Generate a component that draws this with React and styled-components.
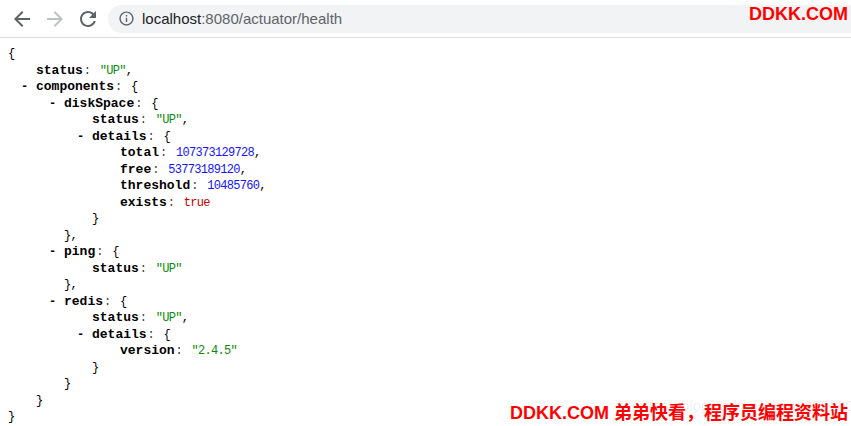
import React from 'react';
import styled, { createGlobalStyle } from 'styled-components';

const GlobalStyle = createGlobalStyle`
  html, body {
    margin: 0;
    padding: 0;
    background: #fff;
    overflow: hidden;
  }
`;

const Page = styled.div`
  position: relative;
  width: 851px;
  height: 426px;
  overflow: hidden;
  background: #fff;
`;

const Toolbar = styled.header`
  display: flex;
  align-items: center;
  height: 37px;
  padding-left: 10px;
  border-bottom: 1px solid #dadce0;
  overflow: hidden;
  box-sizing: content-box;
`;

const NavButton = styled.span`
  display: flex;
  width: 24px;
  height: 24px;
  margin-right: 9px;
  color: ${(p) => (p.disabled ? '#bdc1c6' : '#5f6368')};
`;

const Omnibox = styled.div`
  flex: 1;
  display: flex;
  align-items: center;
  gap: 7px;
  height: 28px;
  margin-left: -1px;
  margin-right: -20px;
  padding-left: 10px;
  border-radius: 14px;
  background: #f1f3f4;
  color: #5f6368;
`;

const Url = styled.span`
  font-family: 'Liberation Sans', Arial, sans-serif;
  font-size: 15px;
  color: #5f6368;
  b {
    font-weight: normal;
    color: #202124;
  }
`;

const Viewer = styled.main`
  padding: 8px 0 0 8px;
`;

const Line = styled.div`
  position: relative;
  height: 16.5px;
  line-height: 16.5px;
  padding-left: ${(p) => p.depth * 28}px;
  white-space: pre;
  font-family: 'Liberation Mono', 'Courier New', monospace;
  font-size: 12px;
  letter-spacing: -0.7px;
  color: #000;
`;

const Toggle = styled.span`
  display: inline-block;
  width: 16px;
  margin-left: -16px;
  padding-left: 1px;
  box-sizing: border-box;
  font-weight: bold;
  letter-spacing: 0;
`;

const Key = styled.span`
  font-size: 13px;
  font-weight: bold;
  letter-spacing: 0;
  color: #000;
`;

const Colon = styled.span`
  display: inline-block;
  width: 17px;
  padding-left: 1px;
  box-sizing: border-box;
  color: #444;
`;

const Value = styled.span`
  color: ${(p) => p.color};
`;

const Watermark = styled.div`
  position: absolute;
  right: ${(p) => p.right}px;
  ${(p) => (p.top !== undefined ? `top: ${p.top}px;` : `bottom: ${p.bottom}px;`)}
  font-family: 'Liberation Sans', 'Noto Sans CJK SC', sans-serif;
  font-weight: bold;
  font-size: ${(p) => p.size}px;
  color: #ff0000;
  white-space: nowrap;
`;

const Ghost = styled.div`
  position: absolute;
  left: 636px;
  bottom: 12px;
  font-family: 'Liberation Sans', Arial, sans-serif;
  font-size: 15px;
  color: rgba(0, 0, 0, 0.08);
  white-space: nowrap;
`;

const Icon = ({ d, size = 24, view = 24 }) => (
  <svg width={size} height={size} viewBox={`0 0 ${view} ${view}`} fill="currentColor">
    <path d={d} />
  </svg>
);

const BACK = 'M20 11H7.83l5.59-5.59L12 4l-8 8 8 8 1.41-1.41L7.83 13H20v-2z';
const FORWARD = 'M12 4l-1.41 1.41L16.17 11H4v2h12.17l-5.58 5.59L12 20l8-8z';
const RELOAD =
  'M17.65 6.35C16.2 4.9 14.21 4 12 4c-4.42 0-7.99 3.58-7.99 8s3.57 8 7.99 8c3.73 0 6.84-2.550 7.73-6h-2.08c-.82 2.33-3.04 4-5.65 4-3.31 0-6-2.69-6-6s2.69-6 6-6c1.66 0 3.14.69 4.22 1.78L13 11h7V4l-2.35 2.35z';
const INFO =
  'M11 7h2v2h-2zm0 4h2v6h-2zm1-9C6.48 2 2 6.48 2 12s4.48 10 10 10 10-4.48 10-10S17.52 2 12 2zm0 18c-4.41 0-8-3.59-8-8s3.59-8 8-8 8 3.59 8 8-3.59 8-8 8z';

const health = {
  status: 'UP',
  components: {
    diskSpace: {
      status: 'UP',
      details: {
        total: 107373129728,
        free: 53773189120,
        threshold: 10485760,
        exists: true,
      },
    },
    ping: { status: 'UP' },
    redis: {
      status: 'UP',
      details: { version: '2.4.5' },
    },
  },
};

const colorOf = (v) => {
  if (typeof v === 'string') return '#0a8a0a';
  if (typeof v === 'number') return '#1414ff';
  return '#c80000';
};

const show = (v) => (typeof v === 'string' ? `"${v}"` : String(v));

// flattens the json into printable lines
const buildLines = (value, depth, name, last, out) => {
  const comma = last ? '' : ',';
  const id = `${depth}-${name}-${out.length}`;
  if (value !== null && typeof value === 'object') {
    const entries = Object.entries(value);
    out.push(
      <Line key={id} depth={depth}>
        {name && <Toggle>-</Toggle>}
        {name && <Key>{name}</Key>}
        {name && <Colon>:</Colon>}
        {'{'}
      </Line>
    );
    entries.forEach(([k, v], i) => buildLines(v, depth + 1, k, i === entries.length - 1, out));
    out.push(
      <Line key={`${id}-end`} depth={depth}>
        {'}' + comma}
      </Line>
    );
  } else {
    out.push(
      <Line key={id} depth={depth}>
        <Key>{name}</Key>
        <Colon>:</Colon>
        <Value color={colorOf(value)}>{show(value)}</Value>
        {comma}
      </Line>
    );
  }
  return out;
};

const App = () => (
  <Page>
    <GlobalStyle />
    <Toolbar>
      <NavButton>
        <Icon d={BACK} />
      </NavButton>
      <NavButton disabled>
        <Icon d={FORWARD} />
      </NavButton>
      <NavButton>
        <Icon d={RELOAD} />
      </NavButton>
      <Omnibox>
        <Icon d={INFO} size={17} />
        <Url>
          <b>localhost</b>:8080/actuator/health
        </Url>
      </Omnibox>
    </Toolbar>
    <Viewer>{buildLines(health, 0, null, true, [])}</Viewer>
    <Watermark right={3} top={4} size={18}>
      DDKK.COM
    </Watermark>
    <Ghost>https://blog.csdn.net/wxw000100</Ghost>
    <Watermark right={3} bottom={2} size={18}>
      DDKK.COM 弟弟快看，程序员编程资料站
    </Watermark>
  </Page>
);

export default App;
